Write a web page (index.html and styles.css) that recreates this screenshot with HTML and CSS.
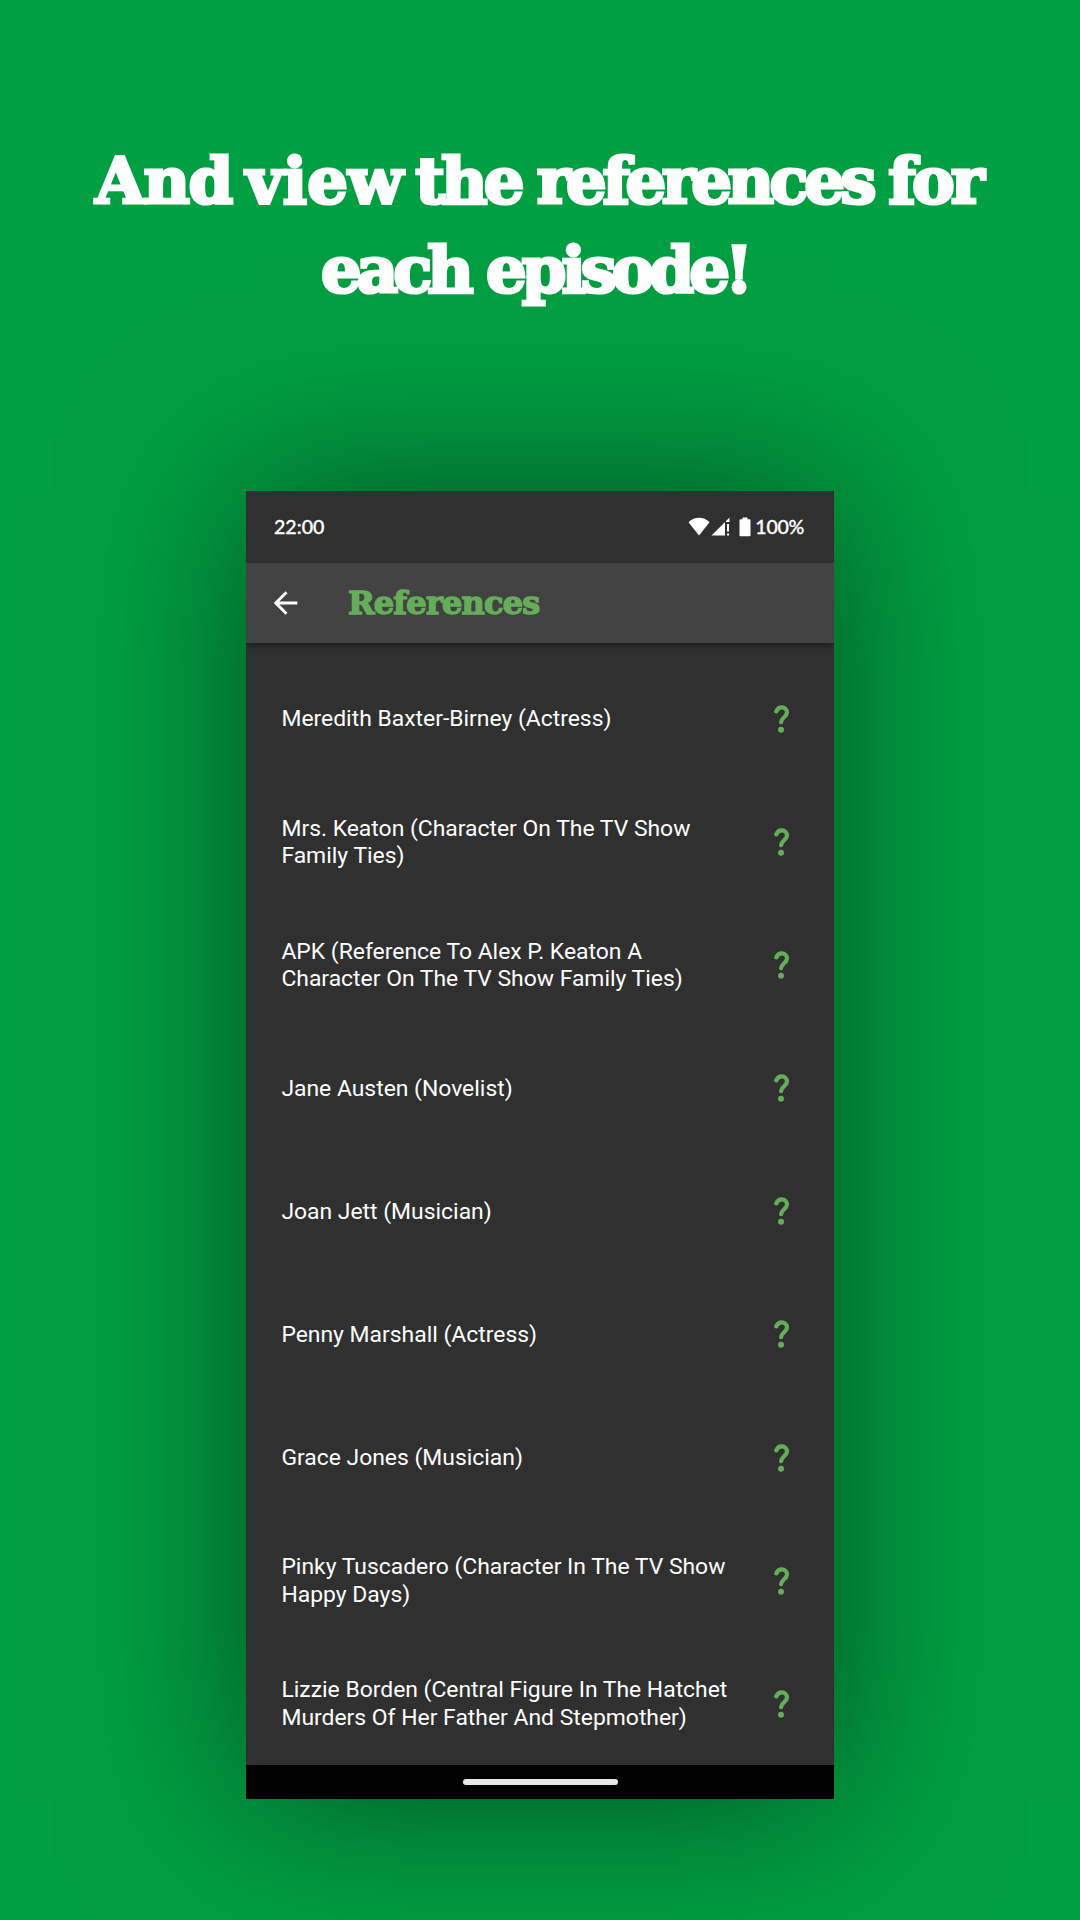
FILE: index.html
```html
<!DOCTYPE html>
<html lang="en">
<head>
<meta charset="utf-8">
<title>References</title>
<link rel="stylesheet" href="styles.css">
</head>
<body>
<svg class="defs" width="0" height="0" aria-hidden="true">
  <symbol id="help" viewBox="0 0 16 28">
    <path d="M2.3 6.4C3.4 3.7 5.2 2.4 7.7 2.4C10.9 2.4 13 4.8 13 7.6C13 11.9 7.2 12.6 7.1 17.2" fill="none" stroke="currentColor" stroke-width="4.2" stroke-linecap="round"/>
    <circle cx="7" cy="24.7" r="3" fill="currentColor"/>
  </symbol>
</svg>
<main class="poster">
  <h1 class="headline"><span class="line-one"><span class="loose">And</span> <span class="looser">view</span> the <span class="tight">references</span> for</span><span class="line-two">each episode!</span></h1>
  <section class="phone">
    <div class="status">
      <span class="clock">22:00</span>
      <svg class="signals" width="64" height="20" viewBox="0 0 64 20">
        <path d="M0.5 5.2C6.5-.6 15.500-.6 21.500 5.200L11 18.500Z" fill="#fff"/>
        <path d="M23.500 18.500L37 5V18.500ZM38 4L41.500.5V5H38Z" fill="#fff"/>
        <path d="M39 7h2v7.500h-2zM39 16.500h2v2h-2z" fill="#fff"/>
        <path d="M54.500 .5h5v1.800h2q1 0 1 1V18.200q0 1-1 1h-9q-1 0-1-1V3.300q0-1 1-1h2z" fill="#fff"/>
      </svg>
      <span class="battery">100%</span>
    </div>
    <header class="appbar">
      <svg class="back" width="24" height="24" viewBox="0 0 24 24"><path d="M23.300 12H2M12.500 1.300L1.800 12L12.500 22.700" fill="none" stroke="#fff" stroke-width="2.900"/></svg>
      <h2 class="title">References</h2>
    </header>
    <ul class="list">
      <li class="row"><span>Meredith Baxter-Birney (Actress)</span><svg class="help"><use href="#help"/></svg></li>
      <li class="row"><span>Mrs. Keaton (Character On The TV Show<br>Family Ties)</span><svg class="help"><use href="#help"/></svg></li>
      <li class="row"><span>APK (Reference To Alex P. Keaton A<br>Character On The TV Show Family Ties)</span><svg class="help"><use href="#help"/></svg></li>
      <li class="row"><span>Jane Austen (Novelist)</span><svg class="help"><use href="#help"/></svg></li>
      <li class="row"><span>Joan Jett (Musician)</span><svg class="help"><use href="#help"/></svg></li>
      <li class="row"><span>Penny Marshall (Actress)</span><svg class="help"><use href="#help"/></svg></li>
      <li class="row"><span>Grace Jones (Musician)</span><svg class="help"><use href="#help"/></svg></li>
      <li class="row"><span>Pinky Tuscadero (Character In The TV Show<br>Happy Days)</span><svg class="help"><use href="#help"/></svg></li>
      <li class="row"><span>Lizzie Borden (Central Figure In The Hatchet<br>Murders Of Her Father And Stepmother)</span><svg class="help"><use href="#help"/></svg></li>
    </ul>
    <footer class="navbar"><span class="handle"></span></footer>
  </section>
</main>
</body>
</html>
```
FILE: styles.css
```css
* { box-sizing: border-box; margin: 0; padding: 0; }
body { background: #009f42; }
.defs { display: block; }
.poster {
  width: 1080px;
  height: 1920px;
  display: flex;
  flex-direction: column;
  align-items: center;
  overflow: hidden;
}
.headline {
  height: 491px;
  padding-top: 136px;
  display: flex;
  flex-direction: column;
  align-items: center;
  flex: none;
  color: #fff;
  font: bold 64px/89px "DejaVu Serif", serif;
  white-space: nowrap;
  -webkit-text-stroke: 3.2px #fff;
}
.line-one { letter-spacing: -3.8px; word-spacing: -2.4px; margin-right: 4px; }
.loose { letter-spacing: -1.4px; margin-right: -2.4px; }
.looser { letter-spacing: 0; margin-right: -3.8px; }
.tight { letter-spacing: -4.4px; }
.line-two { letter-spacing: -5px; margin-right: 11px; }
.phone {
  width: 588px;
  height: 1308px;
  display: flex;
  flex-direction: column;
  flex: none;
  background: #303030;
  box-shadow: 0 0 160px rgba(0, 0, 0, .5);
}
.status {
  height: 72px;
  flex: none;
  display: flex;
  align-items: center;
  padding: 0 30px 0 28px;
  color: #fff;
  font: 500 19.6px/24px Lato, sans-serif;
  -webkit-text-stroke: .3px #fff;
}
.signals { margin: 0 3px 1px auto; }
.battery { letter-spacing: -.3px; }
.appbar {
  height: 80px;
  flex: none;
  display: flex;
  align-items: center;
  padding-left: 28px;
  background: #424242;
  box-shadow: 0 2px 7px rgba(0, 0, 0, .5);
  clip-path: inset(0 0 -16px 0);
}
.title {
  margin-left: 50px;
  color: #66ad5b;
  font: bold 32px/40px "DejaVu Serif", serif;
  letter-spacing: -.8px;
  -webkit-text-stroke: 1.4px #66ad5b;
}
.list {
  flex: 1;
  min-height: 0;
  padding-top: 14.4px;
  overflow: hidden;
  list-style: none;
}
.row {
  height: 123.1px;
  display: flex;
  align-items: center;
  justify-content: space-between;
  padding: 0 44px 0 35.4px;
  color: #fff;
  font: 400 22.9px/27.3px Roboto, sans-serif;
  white-space: nowrap;
}
.help { width: 16px; height: 28px; color: #66ad5b; }
.navbar {
  height: 34px;
  flex: none;
  display: grid;
  place-items: center;
  background: #000;
}
.handle { width: 155px; height: 6px; border-radius: 3px; background: #e8e8e8; }
```
